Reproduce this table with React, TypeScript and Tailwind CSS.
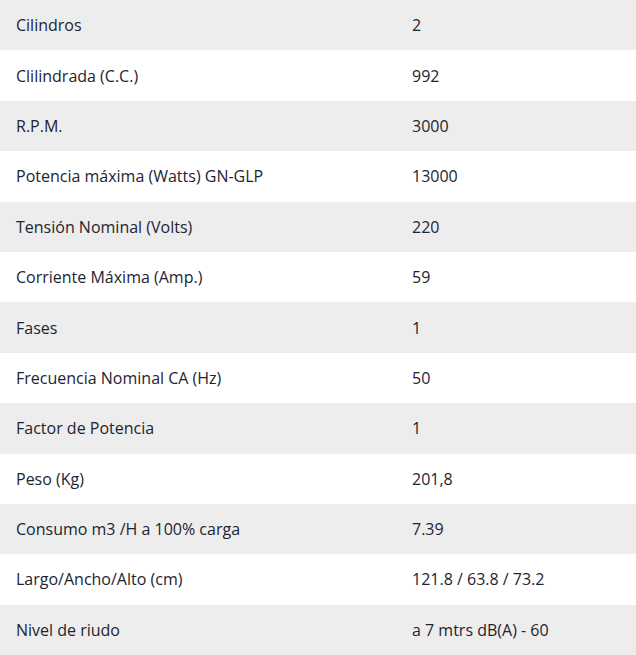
const rows: [string, string][] = [
  ['Cilindros', '2'],
  ['Clilindrada (C.C.)', '992'],
  ['R.P.M.', '3000'],
  ['Potencia máxima (Watts) GN-GLP', '13000'],
  ['Tensión Nominal (Volts)', '220'],
  ['Corriente Máxima (Amp.)', '59'],
  ['Fases', '1'],
  ['Frecuencia Nominal CA (Hz)', '50'],
  ['Factor de Potencia', '1'],
  ['Peso (Kg)', '201,8'],
  ['Consumo m3 /H a 100% carga', '7.39'],
  ['Largo/Ancho/Alto (cm)', '121.8 / 63.8 / 73.2'],
  ['Nivel de riudo', 'a 7 mtrs dB(A) - 60'],
];

export default function App() {
  return (
    <div className="w-[636px] bg-white font-['Open_Sans',sans-serif] text-[16px] text-[#1e2430]">
      {rows.map(([label, value], i) => (
        <div
          key={label}
          className={`flex h-[50.4px] items-center ${i % 2 === 0 ? 'bg-[#ededed]' : 'bg-white'}`}
        >
          <div className="w-[396px] pl-4">{label}</div>
          <div className="flex-1 pl-4">{value}</div>
        </div>
      ))}
    </div>
  );
}
